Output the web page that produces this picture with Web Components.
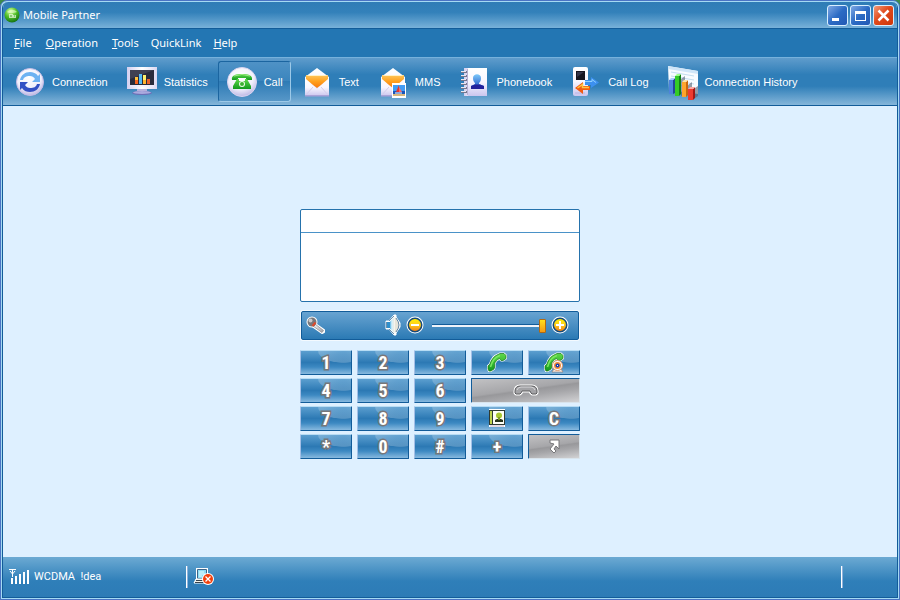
<!DOCTYPE html>
<html lang="en">
<head>
<meta charset="utf-8">
<title>Mobile Partner</title>
<style>
  html, body { height: 100%; }
  body { margin: 0; background: #3c8a4c; font: 11px/16px "Noto Sans", "Open Sans", sans-serif; color: #fff; }
</style>
</head>
<body>
<mp-window>
  <mp-titlebar slot="title">Mobile Partner</mp-titlebar>
  <mp-menubar slot="menu"></mp-menubar>
  <mp-toolbar slot="tools">
    <mp-tool icon="connection">Connection</mp-tool>
    <mp-tool icon="statistics">Statistics</mp-tool>
    <mp-tool icon="call" active>Call</mp-tool>
    <mp-tool icon="text">Text</mp-tool>
    <mp-tool icon="mms">MMS</mp-tool>
    <mp-tool icon="phonebook">Phonebook</mp-tool>
    <mp-tool icon="calllog">Call Log</mp-tool>
    <mp-tool icon="history">Connection History</mp-tool>
  </mp-toolbar>
  <mp-dialer></mp-dialer>
  <mp-statusbar slot="status"><span>WCDMA&nbsp; !dea</span></mp-statusbar>
</mp-window>

<script>
const svg = (w, h, body) => `<svg width="${w}" height="${h}" viewBox="0 0 ${w} ${h}" aria-hidden="true">${body}</svg>`;

const defs = `<defs>
<radialGradient id="ball" cx=".45" cy=".3" r=".75"><stop offset="0" stop-color="#fff"/><stop offset=".6" stop-color="#f1effb"/><stop offset="1" stop-color="#b3aee0"/></radialGradient>
<linearGradient id="lilac" x2="0" y2="1"><stop offset="0" stop-color="#fff"/><stop offset=".5" stop-color="#f8f6ff"/><stop offset="1" stop-color="#cbc5ee"/></linearGradient>
<linearGradient id="lilacx"><stop offset="0" stop-color="#d3cff0"/><stop offset=".5" stop-color="#fff"/><stop offset="1" stop-color="#dcd8f2"/></linearGradient>
<linearGradient id="orange" x2="0" y2="1"><stop offset="0" stop-color="#ffc65a"/><stop offset=".5" stop-color="#ffa01e"/><stop offset="1" stop-color="#f8780c"/></linearGradient>
<linearGradient id="green" x2="0" y2="1"><stop offset="0" stop-color="#5fd84a"/><stop offset="1" stop-color="#129a1e"/></linearGradient>
<linearGradient id="sky" x2="0" y2="1"><stop offset="0" stop-color="#7cc8fa"/><stop offset="1" stop-color="#1648c0"/></linearGradient>
<linearGradient id="steel" x2="1" y2="1"><stop offset="0" stop-color="#fff"/><stop offset="1" stop-color="#9a9aa0"/></linearGradient>
<linearGradient id="cone"><stop offset="0" stop-color="#4fb2e6"/><stop offset=".4" stop-color="#d6f0fa"/><stop offset="1" stop-color="#eceadf"/></linearGradient>
<radialGradient id="glob" cx=".4" cy=".25" r=".8"><stop offset="0" stop-color="#d8ff9c"/><stop offset=".5" stop-color="#4fbe28"/><stop offset="1" stop-color="#0d6a10"/></radialGradient>
<linearGradient id="gold" x2="0" y2="1"><stop offset="0" stop-color="#fff000"/><stop offset=".45" stop-color="#ffd21a"/><stop offset="1" stop-color="#f07818"/></linearGradient>
</defs>`;

const envelope = `<path d="M4 11L16 2l12 9v19H4z" fill="url(#lilac)"/><path d="M5 9h22v4l-7 6-4 3-4-3-7-6z" fill="url(#orange)"/><path d="M5 9h22l-2 1H7z" fill="#fff1c8"/><path d="M4 13l8 6.500 4 3.500 4-3.500 8-6.500v17H4z" fill="url(#lilac)"/><path d="M4.500 29.500L12 21M27.500 29.500L20 21" stroke="#d3cdec" fill="none"/><path d="M4 29h24v1.500H4z" fill="#aaa2d8"/>`;
const shape = `M2 15L4 13C5 9 8 5 12 3.500L14 2.500h4l2 2v3L17 9.500h-2l-1.500-2C11 8.500 9 11 8.500 13L9 15 8 18 5 20H3L2 18z`;
const handset = `<path d="${shape}" fill="#fff" stroke="#fff" stroke-width="2" stroke-linejoin="round"/><path d="${shape}" fill="url(#green)" stroke="#1b7b22" stroke-width=".750"/><path d="M4.500 16C6 10 9 6 14 4.500" stroke="#7be85e" stroke-width="1.500" fill="none"/>`;
const cradle = `M2 8c0-3 2-5 5-5h12c3 0 5 2 5 5v2l-1 1h-4l-1-1-1-2H9l-1 2-1 1H3l-1-1z`;

const ICONS = {
  logo: svg(16, 16, `<circle cx="8" cy="8" r="7.500" fill="url(#glob)"/><path d="M3 5c3-3 7-3 10 0-3 1-7 2-10 0z" fill="#e9ffd0" opacity=".6"/><path d="M5 7h4v4H5zM9 8h3v3H9z" fill="#f1fbe6" opacity=".7"/><path d="M6 9h2M10 9h1" stroke="#4ea73a"/>`),
  connection: svg(32, 32, `<circle cx="16" cy="16" r="13.500" fill="url(#ball)" stroke="#c5bde6"/><path d="M6 14c1-5 5-8 10-8 3 0 6 1 8 4l2-2v8h-8l3-3c-1-2-3-3-5-3-4 0-6 1-7 4z" fill="#6db2f2"/><path d="M26 18c-1 5-5 8-10 8-3 0-6-1-8-4l-2 2v-8h8l-3 3c1 2 3 3 5 3 4 0 6-1 7-4z" fill="#3350c4"/>`),
  statistics: svg(32, 32, `<path d="M1 1h30v22H1z" fill="url(#lilacx)"/><path d="M4 4h24v15H4z" fill="#2a2b3c"/><path d="M4 4h24L4 13z" fill="#3f4052"/><path d="M9 11h3v7H9z" fill="#ffc03c"/><path d="M9 14h3v4H9z" fill="#f4611c"/><path d="M13 8h3v10h-3z" fill="#53b9f4"/><path d="M17 9h3v9h-3z" fill="#fff06c"/><path d="M17 14h3v4h-3z" fill="#ffb42f"/><path d="M21 13h3v5h-3z" fill="#e8622c"/><path d="M4 20h24" stroke="#eeeaff"/><path d="M11 23h10v2l2 1H9l2-1z" fill="#b5b0dc"/><ellipse cx="16" cy="27" rx="10" ry="2" fill="#6b70b6"/><ellipse cx="16" cy="26.500" rx="9" ry="1.500" fill="#aaa9de"/>`),
  call: svg(32, 32, `<circle cx="16" cy="16" r="14.500" fill="url(#ball)" stroke="#d9d3ef"/><path d="M6 14c-1-5 4-6 10-6s11 1 10 6h-6v-2h-8v2z" fill="url(#green)"/><path d="M11 13h2v2h6v-2h2l4 7v3H7v-3z" fill="url(#green)"/><circle cx="16" cy="18" r="3" fill="#eefbe9"/><circle cx="16" cy="18" r="2" fill="#3db132"/><path d="M8 10q8-3 16 0" stroke="#9bea83" fill="none"/>`),
  text: svg(32, 32, envelope),
  mms: svg(32, 32, envelope + `<path d="M15 17h14v15H15z" fill="#fff"/><path d="M16 19h12v6H16z" fill="#429cf4"/><path d="M16 25h12v3H16z" fill="#1b54bb"/><path d="M16 28h12v2H16z" fill="#d7b77d"/><path d="M22 19v7h-3z" fill="#e9332b"/><path d="M22 21l3 5h-3z" fill="#ff6b64"/><path d="M18 27h7" stroke="#fff"/>`),
  phonebook: svg(32, 32, `<path d="M6 2h23v28H6z" fill="url(#lilacx)"/><path d="M10 2h19v28H10z" fill="url(#lilac)"/><path d="M9.500 3v26" stroke="#b6b0d4"/><path d="M3 6h6M3 10h6M3 14h6M3 18h6M3 22h6M3 26h6" stroke="#77778c" stroke-width="2"/><path d="M3 5.500h5M3 9.500h5M3 13.500h5M3 17.500h5M3 21.500h5M3 25.500h5" stroke="#e8e8f2"/><path d="M15 12c0-5 8-5 8 0 0 3-1 4-2 5v1l5 2v3H13v-3l4-2v-1c-1-1-2-2-2-5z" fill="url(#sky)"/><path d="M13 20l4-1.500h5l4 1.500v3H13z" fill="#23219c"/>`),
  calllog: svg(32, 32, `<rect x="3" y="1" width="15" height="29" rx="2" fill="url(#lilac)"/><path d="M6 5h9v9H6z" fill="#161620"/><path d="M7 6h7L7 11z" fill="#34354a"/><path d="M5 27h10" stroke="#bcb5e2"/><path d="M15 14h6v-3l8 5.500-8 5.500v-3h-6z" fill="#3c90f0"/><path d="M15 15.500h7v-2l4 3" stroke="#8fd0ff" fill="none"/><path d="M20 20h-7v-4l-8 6 8 6v-4h7z" fill="#f25b12"/><path d="M7.500 22l5-3.500V21.500H19" stroke="#ffc545" fill="none" stroke-width="1.500"/>`),
  history: svg(32, 32, `<path d="M1 0l30 5v23L2 24z" fill="#f8fbff"/><path d="M1 0l30 5v3L1 3z" fill="#cfe5f8"/><path d="M4 6l23 4M4 10l23 4M5 14l22 4M5 18l22 4" stroke="#c3def0"/><path d="M14 13l4-3v19l-4 1zM21 19l4-3v14l-4 1zM28 22l3-2v10l-3 2z" fill="#555f70" opacity=".6"/><path d="M2 14h4v14H2z" fill="#4f83dc"/><path d="M6 14l2-2v15l-2 1z" fill="#234896"/><path d="M2 14l2-2h4l-2 2z" fill="#a9ccff"/><path d="M8 10h4v20H8z" fill="#34cb26"/><path d="M12 10l2-2v20l-2 2z" fill="#128016"/><path d="M8 10l2-2h4l-2 2z" fill="#a2ff8b"/><path d="M15 16h4v15h-4z" fill="#ffa52c"/><path d="M19 16l2-2v15l-2 2z" fill="#c8670d"/><path d="M15 16l2-2h4l-2 2z" fill="#ffe3a5"/><path d="M21 23h5v11h-5z" fill="#ee3b31"/><path d="M26 23l2-2v11l-2 2z" fill="#a21816"/><path d="M21 23l2-2h5l-2 2z" fill="#ffa6a0"/>`),
  mic: svg(20, 18, `<path d="M8 7L18 14v2l-2 1L6 10z" fill="#fff" stroke="#fff" stroke-width="2" stroke-linejoin="round"/><circle cx="6" cy="6" r="5.500" fill="#fff"/><path d="M9 8l8.500 6.500-1.500 2L7 10z" fill="url(#steel)" stroke="#8c8c90" stroke-width=".750"/><circle cx="6" cy="6" r="4.500" fill="#77777b"/><circle cx="4.500" cy="4.500" r="2" fill="#c9c9cc"/><path d="M9.500 6.500L6.500 10" stroke="#e0492b" stroke-width="2"/>`),
  speaker: svg(16, 22, `<path d="M1 7h3L9 1h2v2l2 3 2 3v4l-2 3-2 3v2H9l-5-6H1z" fill="#fff" stroke="#fff" stroke-linejoin="round"/><path d="M2 8h3v6H2z" fill="#2f8fcb"/><path d="M5 7.500L9.500 2.500v17L5 14.500z" fill="url(#cone)"/><path d="M4 15l5 5M4 7l5-5M1.500 8v6" stroke="#3d6b92" stroke-width=".750" fill="none"/><path d="M10 3v16q4-5 4-8t-4-8z" fill="#e6e4d8"/><path d="M11 4q3 4 3 7t-3 7" stroke="#2d5f8c" stroke-width=".750" fill="none"/>`),
  minus: svg(18, 18, `<circle cx="9" cy="9" r="8.500" fill="#fff"/><circle cx="9" cy="9" r="6.750" fill="url(#gold)" stroke="#174b7b" stroke-width="1.500"/><path d="M5 9h8" stroke="#fff" stroke-width="2"/>`),
  plus: svg(18, 18, `<circle cx="9" cy="9" r="8.500" fill="#fff"/><circle cx="9" cy="9" r="6.750" fill="url(#gold)" stroke="#174b7b" stroke-width="1.500"/><path d="M5 9h8M9 5v8" stroke="#fff" stroke-width="2"/>`),
  dial: svg(22, 22, handset),
  video: svg(22, 22, handset + `<path d="M11 18h7l2 3H9z" fill="#efe9e5" stroke="#9a6a50" stroke-width=".500"/><circle cx="14.500" cy="14.500" r="5" fill="#fff" stroke="#e09a6c"/><circle cx="14.500" cy="14.500" r="3.500" fill="#f28a36"/><circle cx="14.500" cy="14.500" r="2" fill="#173bb2"/><path d="M14 14h1v1h-1z" fill="#fff"/>`),
  hangup: svg(26, 14, `<path d="${cradle}" fill="#fff" stroke="#fff" stroke-width="3" stroke-linejoin="round"/><path d="${cradle}" fill="#a3a3a6" stroke="#5a5a5d"/><path d="M4 7q1-3 4-3h10q3 0 4 3" stroke="#d8d8da" fill="none"/>`),
  contact: svg(18, 18, `<path d="M1 0h16v18H1z" fill="#fff"/><path d="M1 1h16v15H1z" fill="#303b32"/><path d="M2 2h2v13H2z" fill="#bed44e"/><path d="M5 2h11v13H5z" fill="#fffff6"/><path d="M7 13v-2l2-1h4l2 1v2z" fill="#26331a"/><circle cx="11" cy="6.500" r="3" fill="#a8c72f"/><path d="M10 8h2v3h-2z" fill="#7d9c25"/><path d="M2 17h14" stroke="#c5b6c8"/>`),
  send: svg(16, 16, `<path d="M4 2h9v9l-3-3-2 3 2 2-2 2-4-4 4-5-4-1z" fill="#fff" stroke="#77777a" stroke-linejoin="round"/>`),
  signal: svg(20, 18, `<path d="M0 1.500h7M1 3l2.500 3L6 3M3.500 2v7" fill="none" stroke="#fff"/><path d="M2 10h2v6H2zM6 8h2v8H6zM10 6h2v10h-2zM14 4h2v12h-2zM18 2h2v14h-2z" fill="#fff"/>`),
  offline: svg(20, 18, `<path d="M2 0h12v12H2z" fill="#fff"/><path d="M3.500 1.500h9v9h-9z" fill="#8ddcf4" stroke="#3d6488"/><path d="M5 4h5M5 6h6M5 8h3" stroke="#e8ffff"/><path d="M2 11h12l1 4H0z" fill="#f3f2e9" stroke="#fff"/><path d="M2 12.500h10M1 14.500h12" stroke="#39434d"/><circle cx="14" cy="11" r="6" fill="#fff"/><circle cx="14" cy="11" r="5" fill="#f2400c"/><path d="M11.500 8.500l5 5M16.500 8.500l-5 5" stroke="#fff" stroke-width="1.250"/>`),
};

const define = (name, html, setup) => customElements.define(name, class extends HTMLElement {
  constructor() {
    super();
    const t = document.createElement('template');
    t.innerHTML = html;
    this.attachShadow({ mode: 'open' }).append(t.content.cloneNode(true));
  }
  connectedCallback() { if (setup) setup(this, this.shadowRoot); }
});

define('mp-icon', `<style>:host{display:inline-flex;flex:none}svg{display:block;overflow:visible;paint-order:normal}</style><div></div>`, (el, root) => {
  root.querySelector('div').innerHTML = (ICONS[el.getAttribute('name')] || '').replace('>', '>' + defs);
});

define('mp-window', `<style>
:host{display:block;height:100vh;min-height:480px;box-sizing:border-box;border:1px solid #4a73c4;border-radius:7px 7px 0 0;background:#a5daf3;padding:1px}
.body{height:100%;box-sizing:border-box;display:flex;flex-direction:column;border:1px solid #125c99;border-top:0;border-radius:6px 6px 0 0;overflow:hidden;background:#def0ff}
main{flex:1;display:flex;align-items:center;justify-content:center;padding:4px 20px 0 0}
</style><div class="body"><slot name="title"></slot><slot name="menu"></slot><slot name="tools"></slot><main><slot></slot></main><slot name="status"></slot></div>`);

define('mp-titlebar', `<style>
:host{display:flex;align-items:center;height:26px;border-bottom:1px solid #125c99;padding:0 3px 0 1px;background:linear-gradient(#2f7cb6,#3381ba 40%,#78b1d9)}
h1{flex:1;margin:0 0 0 3px;font:inherit}
.box{display:flex;gap:2px}
button{width:21px;height:21px;box-sizing:border-box;padding:0;border:1px solid #d9efff;border-radius:3px;background:linear-gradient(135deg,#7fa8e4,#2c6bc4 50%,#2359b4);display:grid;place-items:center}
button.close{background:linear-gradient(135deg,#f39a78,#e04a1c 45%,#cf3509)}
svg{display:block}
</style><mp-icon name="logo"></mp-icon><h1><slot></slot></h1>
<div class="box">
<button aria-label="Minimize">${svg(17, 17, '<path d="M3 11h7v3H3z" fill="#fff"/>')}</button>
<button aria-label="Maximize">${svg(17, 17, '<path d="M3 4h11v10H3zM4 7v6h9V7z" fill="#fff" fill-rule="evenodd"/>')}</button>
<button class="close" aria-label="Close">${svg(17, 17, '<path d="M3.500 3.500l10 10M13.500 3.500l-10 10" stroke="#fff" stroke-width="2.500"/>')}</button>
</div>`);

define('mp-menubar', `<style>
:host{display:block;background:#2376b3}
nav{display:flex;height:28px;align-items:center;padding:0 7px;gap:6px}
button{font:inherit;color:inherit;background:none;border:0;padding:0 4px}
button.quick{padding:0 2px}
</style><nav aria-label="Menu"><button><u>F</u>ile</button><button><u>O</u>peration</button><button><u>T</u>ools</button><button class="quick">QuickLink</button><button><u>H</u>elp</button></nav>`);

define('mp-toolbar', `<style>
:host{display:flex;gap:2px;padding:3px;height:41px;border-top:1px solid #76b1dc;border-bottom:1px solid #125c99;background:linear-gradient(#5f9ccc,#2f7eb8 35%,#2f7eb8 60%,#85b6da)}
</style><slot></slot>`);

define('mp-tool', `<style>
:host{display:flex}
button{display:flex;align-items:center;gap:6px;padding:0 7px;border:1px solid transparent;border-radius:3px;background:none;color:inherit;font:11px/16px "Liberation Sans",Arial,sans-serif;white-space:nowrap}
:host([active]) button{border-color:#1b65a0 #9cc9e8 #9cc9e8 #1b65a0;background:linear-gradient(#4f92c6,#3a85bd 49%,#2e7bb5 50%,#5797c8)}
</style><button></button>`, (el, root) => {
  root.querySelector('button').innerHTML = `<mp-icon name="${el.getAttribute('icon')}"></mp-icon><slot></slot>`;
});

define('mp-display', `<style>
:host{display:block;border:1px solid #2572ac;border-radius:2px;background:#fff;margin-bottom:9px}
input,textarea{display:block;width:100%;box-sizing:border-box;border:0;background:none;padding:2px 6px;font:inherit;color:#123;outline:0;resize:none}
input{height:23px;border-bottom:1px solid #4a92c8}
textarea{height:68px}
</style><input type="tel" aria-label="Number"><textarea readonly aria-label="Call details"></textarea>`);

define('mp-volume', `<style>
:host{display:flex;align-items:center;height:27px;margin:0 1px 10px;border:1px solid #125c99;border-radius:2px;box-shadow:0 0 0 1px #f4faff;background:linear-gradient(#68a3d1,#2b7ab4);padding:0 9px 0 4px}
.space{flex:1}
button{padding:0;border:0;background:none;display:flex}
.down{margin:0 8px 0 5px}
input{appearance:none;width:114px;height:16px;margin:0 5px 0 0;background:none}
input::-webkit-slider-runnable-track{height:3px;background:#eef3fa;border-top:1px solid #125c99;box-sizing:border-box}
input::-webkit-slider-thumb{appearance:none;width:7px;height:14px;margin-top:-6px;border:1px solid #b36a10;border-radius:1px;background:linear-gradient(#ffe11c,#f39a15);box-sizing:border-box}
</style><mp-icon name="mic"></mp-icon><span class="space"></span><mp-icon name="speaker"></mp-icon>
<button class="down" aria-label="Volume down"><mp-icon name="minus"></mp-icon></button>
<input type="range" min="0" max="100" value="100" aria-label="Volume">
<button aria-label="Volume up"><mp-icon name="plus"></mp-icon></button>`);

define('mp-key', `<style>
:host{display:block}
:host([wide]){grid-column:span 2}
button{overflow:hidden;display:grid;place-items:center;width:100%;height:25px;padding:0;border:1px solid;border-color:#b7dcf4 #125c99 #125c99 #a3bfe6;border-radius:1px;background:radial-gradient(ellipse 26px 12px at 85% 0,rgba(255,255,255,.06),rgba(255,255,255,.2) 95%,transparent 100%),linear-gradient(#5b9ecf,#2c79b4 50%,#3d89c2 70%,#87b9df);color:#fff;font:bold 18px/24px "Roboto Condensed","Liberation Sans Narrow","Liberation Sans",sans-serif;-webkit-text-stroke:3px #77777a;paint-order:stroke fill}
:host([disabled]) button{border-color:#125c99 #d9e4ec #d9e4ec #125c99;background:linear-gradient(172deg,#c2c2c4,#a6a6a9 45%,#98989b 50%,#a6a6a9 65%,#d2d2d4)}
</style><button><slot></slot></button>`, (el, root) => {
  const b = root.querySelector('button');
  if (el.hasAttribute('label')) b.setAttribute('aria-label', el.getAttribute('label'));
  b.disabled = el.hasAttribute('disabled');
});

define('mp-dialer', `<style>
:host{display:block;width:280px}
.keys{display:grid;grid-template-columns:repeat(5,1fr);gap:3px 5px}
</style><mp-display></mp-display><mp-volume></mp-volume>
<div class="keys">
<mp-key>1</mp-key><mp-key>2</mp-key><mp-key>3</mp-key><mp-key label="Dial"><mp-icon name="dial"></mp-icon></mp-key><mp-key label="Video call"><mp-icon name="video"></mp-icon></mp-key>
<mp-key>4</mp-key><mp-key>5</mp-key><mp-key>6</mp-key><mp-key wide disabled label="Hang up"><mp-icon name="hangup"></mp-icon></mp-key>
<mp-key>7</mp-key><mp-key>8</mp-key><mp-key>9</mp-key><mp-key label="Contacts"><mp-icon name="contact"></mp-icon></mp-key><mp-key>C</mp-key>
<mp-key>*</mp-key><mp-key>0</mp-key><mp-key>#</mp-key><mp-key>+</mp-key><mp-key disabled label="Transfer"><mp-icon name="send"></mp-icon></mp-key>
</div>`);

define('mp-statusbar', `<style>
:host{display:flex;align-items:center;height:40px;padding:0 54px 0 6px;background:linear-gradient(#6caad3,#2f7fb9 60%,#2d7bb6);font:11px/16px Roboto,sans-serif}
.net{display:flex;align-items:center;gap:5px;width:177px}
.rule{width:1px;height:22px;background:#fff;border-right:1px solid #8fb2dc}
.grow{flex:1;padding-left:6px;display:flex}
</style><div class="net"><mp-icon name="signal"></mp-icon><slot></slot></div><span class="rule"></span><div class="grow"><mp-icon name="offline"></mp-icon></div><span class="rule"></span>`);
</script>
</body>
</html>
